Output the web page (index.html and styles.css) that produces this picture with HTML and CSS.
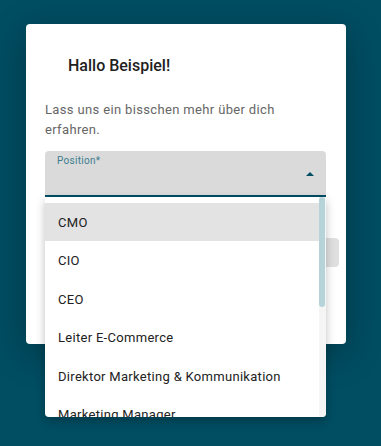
FILE: index.html
```html
<!DOCTYPE html>
<html lang="de">
<head>
    <meta charset="UTF-8">
    <meta name="viewport" content="width=device-width, initial-scale=1.0">
    <title>Hallo Beispiel</title>
    <link rel="stylesheet" href="styles.css">
</head>
<body>
    <div class="dialog">
        <h2 class="dialog-title">Hallo Beispiel!</h2>
        <p class="dialog-text">Lass uns ein bisschen mehr über dich erfahren.</p>

        <!-- Auswahlfeld Position -->
        <div class="select-field">
            <span class="select-label">Position*</span>
            <span class="select-arrow"></span>

            <div class="select-panel">
                <div class="option active">CMO</div>
                <div class="option">CIO</div>
                <div class="option">CEO</div>
                <div class="option">Leiter E-Commerce</div>
                <div class="option">Direktor Marketing &amp; Kommunikation</div>
                <div class="option">Marketing Manager</div>
                <div class="scroll-track"><div class="scroll-thumb"></div></div>
            </div>
        </div>

        <div class="dialog-actions">
            <button class="next-btn">Weiter</button>
        </div>
    </div>
</body>
</html>
```

FILE: styles.css
```css
/* Hintergrund */
body {
    margin: 0;
    min-height: 100vh;
    background-color: #014d62;
    font-family: Roboto, "Noto Sans", Arial, sans-serif;
    overflow: hidden;
}

/* Dialog */
.dialog {
    box-sizing: border-box;
    width: 320px;
    height: 320px;
    margin: 24px 0 0 26px;
    padding: 19px;
    background-color: #ffffff;
    border-radius: 4px;
    box-shadow: 0 9px 36px rgba(0, 0, 0, 0.28);
}

.dialog-title {
    margin: 13px 0 0 23px;
    font-size: 16px;
    line-height: 20px;
    font-weight: 500;
    color: #212121;
}

.dialog-text {
    margin: 24px 0 0 0;
    font-size: 13px;
    line-height: 20px;
    letter-spacing: 0.35px;
    color: #666666;
}

/* Auswahlfeld */
.select-field {
    position: relative;
    box-sizing: border-box;
    height: 46px;
    margin-top: 11px;
    width: 281px;
    background-color: #dadada;
    border-radius: 4px 4px 0 0;
    border-bottom: 2px solid #014d62;
}

.select-label {
    position: absolute;
    left: 12px;
    top: 4px;
    font-size: 10px;
    letter-spacing: 0.3px;
    color: #3b7d8e;
}

.select-arrow {
    position: absolute;
    right: 12px;
    top: 21px;
    width: 0;
    height: 0;
    border-left: 4px solid transparent;
    border-right: 4px solid transparent;
    border-bottom: 4px solid #014d62;
}

/* Dropdown */
.select-panel {
    position: absolute;
    left: 0;
    top: 46px;
    z-index: 10;
    width: 281px;
    height: 220px;
    padding-top: 6px;
    box-sizing: border-box;
    background-color: #ffffff;
    border-radius: 0 0 4px 4px;
    box-shadow: 0 4px 10px rgba(0, 0, 0, 0.25);
    overflow: hidden;
}

.option {
    height: 38.4px;
    line-height: 39px;
    padding-left: 13px;
    font-size: 13px;
    letter-spacing: 0.3px;
    color: #222222;
    white-space: nowrap;
}

.option.active {
    background-color: #e3e3e3;
}

.scroll-track {
    position: absolute;
    right: 0;
    top: 0;
    bottom: 0;
    width: 7px;
    background-color: #f5f5f5;
}

.scroll-thumb {
    width: 6px;
    height: 110px;
    border-radius: 3px;
    background-color: #b7d3da;
}

/* Aktionen */
.dialog-actions {
    display: flex;
    justify-content: flex-end;
    margin: 41px -12px 0 0;
}

.next-btn {
    width: 90px;
    height: 29px;
    border: none;
    border-radius: 4px;
    background-color: #e0e0e0;
    color: #9e9e9e;
    font-family: inherit;
}
```
